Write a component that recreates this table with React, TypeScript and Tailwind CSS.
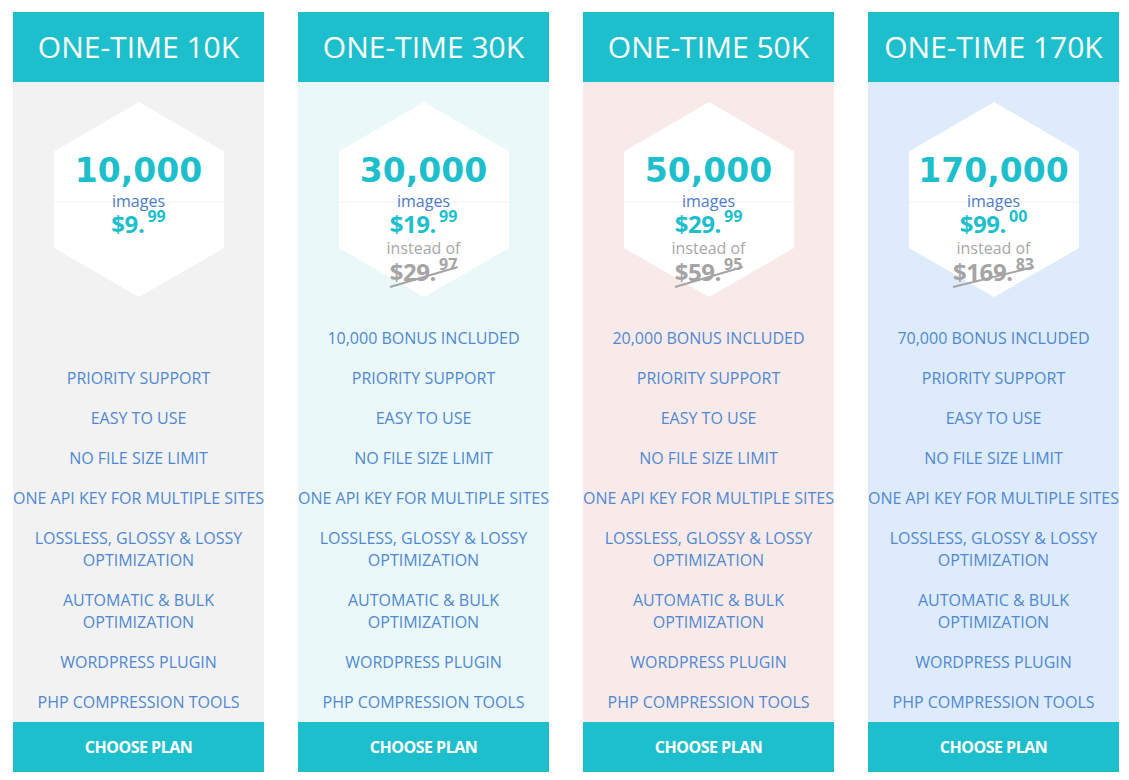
import React from "react";

type Plan = {
  title: string;
  count: string;
  price: string;
  cents: string;
  old?: string;
  oldCents?: string;
  bonus?: string;
  bg: string;
};

const plans: Plan[] = [
  { title: "ONE-TIME 10K", count: "10,000", price: "$9.", cents: "99", bg: "bg-[#f2f2f2]" },
  { title: "ONE-TIME 30K", count: "30,000", price: "$19.", cents: "99", old: "$29.", oldCents: "97", bonus: "10,000 BONUS INCLUDED", bg: "bg-[#eaf8f9]" },
  { title: "ONE-TIME 50K", count: "50,000", price: "$29.", cents: "99", old: "$59.", oldCents: "95", bonus: "20,000 BONUS INCLUDED", bg: "bg-[#f9eaea]" },
  { title: "ONE-TIME 170K", count: "170,000", price: "$99.", cents: "00", old: "$169.", oldCents: "83", bonus: "70,000 BONUS INCLUDED", bg: "bg-[#ddebfa]" },
];

const features: React.ReactNode[] = [
  "PRIORITY SUPPORT",
  "EASY TO USE",
  "NO FILE SIZE LIMIT",
  "ONE API KEY FOR MULTIPLE SITES",
  <>LOSSLESS, GLOSSY &amp; LOSSY<br />OPTIMIZATION</>,
  <>AUTOMATIC &amp; BULK<br />OPTIMIZATION</>,
  "WORDPRESS PLUGIN",
  "PHP COMPRESSION TOOLS",
];

const openSans = { fontFamily: '"Open Sans", "Liberation Sans", sans-serif' };

function Hexagon({ plan }: { plan: Plan }) {
  return (
    <div className="relative w-[170px] h-[195px] mx-auto">
      <svg className="absolute inset-0" width="170" height="195" viewBox="0 0 170 195">
        <polygon points="85,0 170,49.5 170,146 85,195 0,146 0,49.5" fill="#ffffff" />
        <line x1="0" y1="100" x2="170" y2="100" stroke="#efefef" strokeWidth="1" />
      </svg>
      <div className="relative flex flex-col items-center pt-[51px] whitespace-nowrap">
        <div
          className="text-[33px] leading-[36px] font-bold text-[#1dbfcc]"
          style={{ fontFamily: '"DejaVu Sans", "Open Sans", sans-serif' }}
        >
          {plan.count}
        </div>
        <div className="text-[16px] leading-[22px] text-[#4d7cc8] relative top-[1px]" style={openSans}>
          images
        </div>
        <div className="text-[24px] leading-[26px] font-bold text-[#1dbfcc] tracking-[-0.4px]" style={openSans}>
          {plan.price}
          <span className="text-[16px] leading-[16px] align-top relative top-[-3px] ml-[3px] tracking-normal">{plan.cents}</span>
        </div>
        {plan.old && (
          <>
            <div className="text-[16px] leading-[22px] text-[#a8a8a8]" style={openSans}>
              instead of
            </div>
            <div className="relative text-[24px] leading-[26px] font-bold text-[#a4a4a4] tracking-[-0.4px]" style={openSans}>
              {plan.old}
              <span className="text-[16px] leading-[16px] align-top relative top-[-3px] ml-[3px] tracking-normal">{plan.oldCents}</span>
              <svg
                className="absolute left-0 top-0 w-full h-full overflow-visible"
                viewBox="0 0 100 26"
                preserveAspectRatio="none"
              >
                <line x1="0" y1="28" x2="100" y2="8" stroke="#a4a4a4" strokeWidth="2" vectorEffect="non-scaling-stroke" />
              </svg>
            </div>
          </>
        )}
      </div>
    </div>
  );
}

function Column({ plan }: { plan: Plan }) {
  return (
    <div className="w-[251px] h-[760px] flex flex-col">
      <div className="h-[70px] bg-[#1dbfcc] flex items-center justify-center">
        <span className="text-white text-[30px] leading-none" style={openSans}>
          {plan.title}
        </span>
      </div>
      <div className={`flex-1 ${plan.bg} flex flex-col pt-[20px]`}>
        <Hexagon plan={plan} />
        <div
          className="mt-[30px] flex flex-col gap-[18px] text-center text-[16px] leading-[22px] text-[#4f88d2] whitespace-nowrap"
          style={openSans}
        >
          <div className="h-[22px]">{plan.bonus ?? ""}</div>
          {features.map((f, i) => (
            <div key={i}>{f}</div>
          ))}
        </div>
      </div>
      <div className="h-[50px] bg-[#1dbfcc] flex items-center justify-center">
        <span className="text-white text-[16px] font-bold tracking-[-0.5px]" style={openSans}>
          CHOOSE PLAN
        </span>
      </div>
    </div>
  );
}

export default function App() {
  return (
    <div className="w-[1129px] h-[780px] bg-white pt-[12px] pl-[13px] flex gap-[34px]">
      {plans.map((p) => (
        <Column key={p.title} plan={p} />
      ))}
    </div>
  );
}
